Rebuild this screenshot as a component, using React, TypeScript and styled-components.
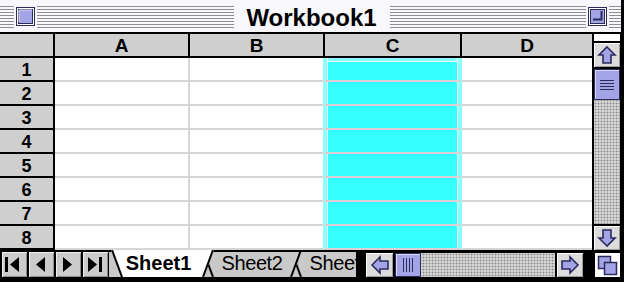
import React from "react";
import styled, { createGlobalStyle } from "styled-components";

const GlobalStyle = createGlobalStyle`
  html, body {
    margin: 0;
    padding: 0;
    background: #fff;
  }
  body {
    font-family: "Liberation Sans", Arial, sans-serif;
  }
`;

const LAVENDER = "#a3a3e6";
const NAVY = "#2b2b5c";
const HEAD_GRAY = "#cfcfcf";
const GRID = "#d6d6d6";
const CYAN = "#33ffff";
const CYAN_EDGE = "#8cffff";

const Window = styled.div`
  width: 624px;
  height: 282px;
  box-sizing: border-box;
  background: #000;
  border-right: 3px solid #000;
  display: flex;
  flex-direction: column;
  overflow: hidden;
`;

const TitleBar = styled.div`
  height: 32px;
  flex: none;
  background: #f7f7fc;
  border-bottom: 2px solid #000;
  display: flex;
  align-items: center;
`;

const Stripes = styled.div<{ $w?: number }>`
  align-self: stretch;
  margin: 6px 0 4px;
  ${(p) => (p.$w ? `width: ${p.$w}px; flex: none;` : "flex: 1;")}
  background: repeating-linear-gradient(
    to bottom,
    #8e8e8e 0 1px,
    transparent 1px 3px
  );
`;

const BoxButton = styled.div`
  width: 19px;
  height: 19px;
  flex: none;
  margin: 0 2px;
  svg {
    display: block;
  }
`;

const Title = styled.div`
  width: 156px;
  flex: none;
  text-align: center;
  font-size: 24px;
  font-weight: 700;
  padding-top: 4px;
  color: #000;
`;

const SheetArea = styled.div`
  display: flex;
  height: 216px;
  flex: none;
`;

const Grid = styled.div`
  display: grid;
  grid-template-columns: 55px 135px 135px 137px 130px;
  grid-template-rows: repeat(9, 24px);
  background: #fff;
`;

const HeadCell = styled.div<{ $last?: boolean }>`
  box-sizing: border-box;
  background: ${HEAD_GRAY};
  border-bottom: 2px solid #000;
  border-right: ${(p) => (p.$last ? "none" : "2px solid #000")};
  display: flex;
  align-items: center;
  justify-content: center;
  font-weight: 700;
  font-size: 19px;
  line-height: 1;
  padding-top: 1px;
  color: #000;
`;

const RowHead = styled(HeadCell)`
  font-size: 18px;
  padding-top: 2px;
`;

const Cell = styled.div<{
  $sel?: boolean;
  $nextSel?: boolean;
  $top?: boolean;
  $last?: boolean;
}>`
  box-sizing: border-box;
  background: ${(p) => (p.$sel ? CYAN : "#fff")};
  border-bottom: 2px solid ${(p) => (p.$sel ? "#dccfd6" : GRID)};
  border-right: ${(p) =>
    p.$last
      ? "none"
      : `2px solid ${p.$sel || p.$nextSel ? CYAN_EDGE : GRID}`};
  box-shadow: ${(p) =>
    p.$sel
      ? `inset 2px 0 ${CYAN_EDGE}, inset 3px 0 #eaffff, inset -2px 0 ${CYAN_EDGE}, inset -3px 0 #eaffff${
          p.$top ? `, inset 0 3px ${CYAN_EDGE}, inset 0 4px #eaffff` : ""
        }`
      : "none"};
`;

const VScroll = styled.div`
  width: 29px;
  box-sizing: border-box;
  border-left: 2px solid #000;
  display: flex;
  flex-direction: column;
  gap: 2px;
  padding-right: 1px;
`;

const SplitPad = styled.div`
  height: 7px;
  background: #fff;
  flex: none;
`;

const ArrowButton = styled.div<{ $w?: number }>`
  flex: none;
  width: ${(p) => (p.$w ? `${p.$w}px` : "auto")};
  height: 24px;
  box-sizing: border-box;
  background: #dcdcdc;
  box-shadow: inset 1px 1px #fff, inset -1px -1px #9a9a9a;
  display: flex;
  align-items: center;
  justify-content: center;
  svg {
    display: block;
  }
`;

const Trough = styled.div<{ $horizontal?: boolean }>`
  flex: 1;
  display: flex;
  flex-direction: ${(p) => (p.$horizontal ? "row" : "column")};
  background-color: #d4d4d4;
  background-image: radial-gradient(circle, #8a8a8a 0.8px, transparent 1.1px);
  background-size: 3px 3px;
`;

const Thumb = styled.div<{ $horizontal?: boolean }>`
  flex: none;
  box-sizing: border-box;
  ${(p) => (p.$horizontal ? "width: 26px;" : "height: 31px;")}
  background: ${LAVENDER};
  border: 1px solid ${NAVY};
  box-shadow: inset 1px 1px #d8d8ff;
  display: flex;
  align-items: center;
  justify-content: center;
  svg {
    display: block;
  }
`;

const BottomBar = styled.div`
  flex: none;
  height: 32px;
  display: flex;
  align-items: flex-start;
`;

const NavGroup = styled.div`
  display: flex;
  gap: 2px;
  margin: 2px 0 0 2px;
`;

const NavButton = styled.div`
  width: 25px;
  height: 25px;
  background: #cbcbcb;
  box-shadow: inset 1px 1px #eee, inset -1px -1px #8a8a8a;
  svg {
    display: block;
  }
`;

const TabStrip = styled.div`
  margin-left: 1px;
  width: 247px;
  height: 27px;
  flex: none;
  display: flex;
  overflow: hidden;
  background: #c9c9c9;
  box-shadow: inset 0 2px #000;
`;

const Tab = styled.div<{ $w: number; $offset: number; $z: number; $active?: boolean }>`
  position: relative;
  flex: none;
  width: ${(p) => p.$w}px;
  height: 27px;
  margin-left: ${(p) => p.$offset}px;
  z-index: ${(p) => p.$z};
  svg {
    position: absolute;
    inset: 0;
  }
`;

const TabLabel = styled.div<{ $active?: boolean; $shift?: number }>`
  position: relative;
  height: 27px;
  line-height: 27px;
  text-align: center;
  padding-right: ${(p) => p.$shift ?? 0}px;
  font-size: 20px;
  font-weight: ${(p) => (p.$active ? 700 : 400)};
  letter-spacing: ${(p) => (p.$active ? "0" : "-0.4px")};
  color: #000;
  white-space: nowrap;
`;

const HScroll = styled.div`
  display: flex;
  gap: 2px;
  margin: 3px 0 0 10px;
  width: 217px;
  height: 24px;
`;

const ResizeBox = styled.div`
  margin: 3px 0 0 12px;
  width: 25px;
  height: 24px;
  background: #fff;
  display: flex;
  align-items: center;
  justify-content: center;
  svg {
    display: block;
  }
`;

const CloseIcon = () => (
  <svg width="19" height="19" viewBox="0 0 19 19">
    <rect x="0.5" y="0.5" width="18" height="18" fill="#fff" stroke={NAVY} />
    <rect x="2.5" y="2.5" width="14" height="14" fill={LAVENDER} stroke={NAVY} />
    <path d="M3 15V3h13" stroke="#e2e2ff" fill="none" />
  </svg>
);

const ZoomIcon = () => (
  <svg width="19" height="19" viewBox="0 0 19 19">
    <rect x="0.5" y="0.5" width="18" height="18" fill="#fff" stroke={NAVY} />
    <rect x="2.5" y="2.5" width="14" height="14" fill={LAVENDER} stroke={NAVY} />
    <path d="M5 12.5h8.5V4" stroke={NAVY} strokeWidth="2" fill="none" />
  </svg>
);

const Arrow = ({ dir }: { dir: "up" | "down" | "left" | "right" }) => {
  const rot = { up: 0, right: 90, down: 180, left: 270 }[dir];
  return (
    <svg width="22" height="22" viewBox="0 0 22 22">
      <path
        d="M11 3L19 11H15V19H7V11H3Z"
        fill={LAVENDER}
        stroke={NAVY}
        strokeWidth="1.6"
        strokeLinejoin="miter"
        transform={`rotate(${rot} 11 11)`}
      />
    </svg>
  );
};

const Grip = ({ horizontal }: { horizontal?: boolean }) =>
  horizontal ? (
    <svg width="12" height="14" viewBox="0 0 12 14">
      {[1, 4, 7, 10].map((x) => (
        <rect key={x} x={x} y="0" width="1" height="14" fill={NAVY} />
      ))}
    </svg>
  ) : (
    <svg width="14" height="12" viewBox="0 0 14 12">
      {[1, 4, 7, 10].map((y) => (
        <rect key={y} x="0" y={y} width="14" height="1" fill={NAVY} />
      ))}
    </svg>
  );

const NavIcon = ({ kind }: { kind: "first" | "prev" | "next" | "last" }) => (
  <svg width="25" height="25" viewBox="0 0 25 25">
    {kind === "first" && (
      <>
        <rect x="3" y="5" width="3" height="15" fill="#000" />
        <polygon points="17,5 17,20 8,12.5" fill="#000" />
      </>
    )}
    {kind === "prev" && <polygon points="16,5 16,20 7,12.5" fill="#000" />}
    {kind === "next" && <polygon points="7,5 7,20 16,12.5" fill="#000" />}
    {kind === "last" && (
      <>
        <polygon points="5,5 5,20 14,12.5" fill="#000" />
        <rect x="16" y="5" width="3" height="15" fill="#000" />
      </>
    )}
  </svg>
);

const TabShape = ({ w, active }: { w: number; active?: boolean }) => (
  <svg width={w} height="27" viewBox={`0 0 ${w} 27`}>
    <polygon
      points={`0,0 ${w},0 ${w - 10},27 10,27`}
      fill={active ? "#fff" : "#c9c9c9"}
    />
    {!active && <rect x="0" y="0" width={w} height="2" fill="#000" />}
    <line x1="1" y1="0" x2="11" y2="27" stroke="#000" strokeWidth="2" />
    <line x1={w - 1} y1="0" x2={w - 11} y2="27" stroke="#000" strokeWidth="2" />
  </svg>
);

const ResizeIcon = () => (
  <svg width="21" height="21" viewBox="0 0 21 21">
    <rect x="1.5" y="1.5" width="12" height="12" fill={LAVENDER} stroke={NAVY} strokeWidth="1.5" />
    <rect x="7.5" y="7.5" width="12" height="12" fill={LAVENDER} stroke={NAVY} strokeWidth="1.5" />
  </svg>
);

const columns = ["A", "B", "C", "D"];
const rows = [1, 2, 3, 4, 5, 6, 7, 8];
const selectedCol = 2;

const tabs = [
  { name: "Sheet1", w: 103, offset: 2, shift: 8, active: true },
  { name: "Sheet2", w: 100, offset: -12, shift: 0 },
  { name: "Sheet3", w: 100, offset: -12, shift: 0 },
];

export default function App() {
  return (
    <>
      <GlobalStyle />
      <Window>
        <TitleBar>
          <Stripes $w={14} />
          <BoxButton>
            <CloseIcon />
          </BoxButton>
          <Stripes />
          <Title>Workbook1</Title>
          <Stripes />
          <BoxButton>
            <ZoomIcon />
          </BoxButton>
          <Stripes $w={12} />
        </TitleBar>

        <SheetArea>
          <Grid>
            <HeadCell />
            {columns.map((c, i) => (
              <HeadCell key={c} $last={i === columns.length - 1}>
                {c}
              </HeadCell>
            ))}
            {rows.map((r) => (
              <React.Fragment key={r}>
                <RowHead>{r}</RowHead>
                {columns.map((c, i) => (
                  <Cell
                    key={c}
                    $sel={i === selectedCol}
                    $nextSel={i + 1 === selectedCol}
                    $top={r === 1}
                    $last={i === columns.length - 1}
                  />
                ))}
              </React.Fragment>
            ))}
          </Grid>
          <VScroll>
            <SplitPad />
            <ArrowButton>
              <Arrow dir="up" />
            </ArrowButton>
            <Trough>
              <Thumb>
                <Grip />
              </Thumb>
            </Trough>
            <ArrowButton>
              <Arrow dir="down" />
            </ArrowButton>
          </VScroll>
        </SheetArea>

        <BottomBar>
          <NavGroup>
            <NavButton>
              <NavIcon kind="first" />
            </NavButton>
            <NavButton>
              <NavIcon kind="prev" />
            </NavButton>
            <NavButton>
              <NavIcon kind="next" />
            </NavButton>
            <NavButton>
              <NavIcon kind="last" />
            </NavButton>
          </NavGroup>
          <TabStrip>
            {tabs.map((t, i) => (
              <Tab key={t.name} $w={t.w} $offset={t.offset} $z={tabs.length - i}>
                <TabShape w={t.w} active={t.active} />
                <TabLabel $active={t.active} $shift={t.shift}>
                  {t.name}
                </TabLabel>
              </Tab>
            ))}
          </TabStrip>
          <HScroll>
            <ArrowButton $w={27}>
              <Arrow dir="left" />
            </ArrowButton>
            <Trough $horizontal>
              <Thumb $horizontal>
                <Grip horizontal />
              </Thumb>
            </Trough>
            <ArrowButton $w={26}>
              <Arrow dir="right" />
            </ArrowButton>
          </HScroll>
          <ResizeBox>
            <ResizeIcon />
          </ResizeBox>
        </BottomBar>
      </Window>
    </>
  );
}
